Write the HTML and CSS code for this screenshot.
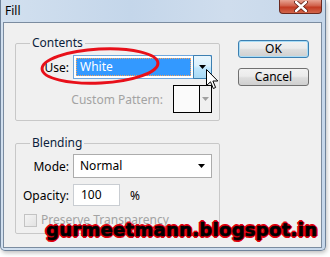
FILE: index.html
```html
<!DOCTYPE html>
<html lang="en">
<head>
    <meta charset="UTF-8">
    <title>Fill</title>
    <link rel="stylesheet" href="styles.css">
</head>
<body>

    <div class="window">
        <div class="titlebar">
            <span class="title">Fill</span>
            <div class="close-button">
                <svg width="14" height="11" viewBox="0 0 14 11">
                    <path d="M2 1 L12 10 M12 1 L2 10" stroke="#5a1a10" stroke-width="4" stroke-linecap="round"/>
                    <path d="M2 1 L12 10 M12 1 L2 10" stroke="#ffffff" stroke-width="2.4" stroke-linecap="round"/>
                </svg>
            </div>
        </div>

        <div class="client">
            <div class="panels">
                <fieldset class="group contents">
                    <legend>Contents</legend>
                    <div class="row">
                        <span class="field-label">Use:</span>
                        <div class="select focused">
                            <span class="select-value">White</span>
                            <span class="select-arrow hover">
                                <svg width="7" height="4" viewBox="0 0 7 4"><path d="M0 0 H7 L3.5 4 Z" fill="#000"/></svg>
                            </span>
                        </div>
                    </div>
                    <div class="row pattern-row">
                        <span class="field-label disabled">Custom Pattern:</span>
                        <div class="pattern-box">
                            <span class="pattern-swatch"></span>
                            <span class="pattern-arrow">
                                <svg width="7" height="4" viewBox="0 0 7 4"><path d="M0 0 H7 L3.5 4 Z" fill="#a0a0a0"/></svg>
                            </span>
                        </div>
                    </div>
                </fieldset>

                <fieldset class="group blending">
                    <legend>Blending</legend>
                    <div class="row">
                        <span class="field-label">Mode:</span>
                        <div class="select plain">
                            <span class="select-value">Normal</span>
                            <span class="select-arrow">
                                <svg width="7" height="4" viewBox="0 0 7 4"><path d="M0 0 H7 L3.5 4 Z" fill="#000"/></svg>
                            </span>
                        </div>
                    </div>
                    <div class="row opacity-row">
                        <span class="field-label">Opacity:</span>
                        <div class="text-input">100</div>
                        <span class="unit">%</span>
                    </div>
                    <div class="row check-row">
                        <span class="checkbox"></span>
                        <span class="disabled">Preserve Transparency</span>
                    </div>
                </fieldset>
            </div>

            <div class="actions">
                <button class="btn default">OK</button>
                <button class="btn">Cancel</button>
            </div>
        </div>

        <svg class="highlight" width="130" height="46" viewBox="0 0 130 46">
            <ellipse cx="64" cy="23" rx="58" ry="17" fill="none" stroke="#e8101a" stroke-width="3" transform="rotate(-3 64 23)"/>
        </svg>

        <svg class="cursor" width="13" height="21" viewBox="0 0 13 21">
            <path d="M0.5 0.5 V16.5 L4.5 12.8 L7.3 19.5 L9.6 18.5 L6.9 12 H11.8 Z" fill="#fff" stroke="#000" stroke-width="1" stroke-linejoin="miter"/>
        </svg>

        <div class="watermark">gurmeetmann.blogspot.in</div>
    </div>

</body>
</html>
```

FILE: styles.css
```css
body {
    margin: 0;
    width: 330px;
    height: 257px;
    background-color: #ffffff;
    font-family: "Noto Sans", "DejaVu Sans", sans-serif;
    font-size: 12px;
    color: #000;
    overflow: hidden;
}

.window {
    position: relative;
    box-sizing: border-box;
    width: 326px;
    height: 251px;
    border: 1px solid #6f839b;
    border-top: none;
    border-radius: 0 0 5px 5px;
    background: linear-gradient(90deg, #d2e0ef 0%, #c4d6ea 40%, #cfdded 70%, #c6d7ea 100%);
    box-shadow: 1px 2px 4px rgba(0, 0, 0, 0.25);
}

.titlebar {
    display: flex;
    justify-content: space-between;
    align-items: flex-start;
    height: 22px;
}

.title {
    padding: 4px 0 0 4px;
    line-height: 14px;
}

.close-button {
    display: flex;
    align-items: center;
    justify-content: center;
    box-sizing: border-box;
    width: 43px;
    height: 14px;
    margin-right: 3px;
    border: 1px solid #6b2a20;
    border-top: none;
    border-radius: 0 0 4px 4px;
    background: linear-gradient(180deg, #e8a393 0%, #d0604a 45%, #c23a22 55%, #d2664c 100%);
}

.client {
    display: flex;
    box-sizing: border-box;
    width: 319px;
    height: 226px;
    margin-left: 2px;
    border: 1px solid #7b8ca0;
    background-color: #f0f0f0;
}

.panels {
    display: flex;
    flex-direction: column;
    padding: 13px 0 0 11px;
}

.group {
    box-sizing: border-box;
    width: 205px;
    margin: 0;
    padding: 0 7px 0 0;
    border: 1px solid #c8c8c8;
    border-radius: 2px;
}

.group legend {
    margin-left: 14px;
    padding: 0 2px;
    line-height: 14px;
    color: #0c1e3c;
}

.contents {
    padding-top: 5px;
    padding-bottom: 7px;
}

.blending {
    margin-top: 15px;
    padding-top: 4px;
    padding-bottom: 6px;
}

.row {
    display: flex;
    align-items: center;
}

.field-label {
    width: 53px;
    margin-right: 4px;
    text-align: right;
}

.disabled {
    color: #a3a3a3;
}

.select {
    display: flex;
    box-sizing: border-box;
    width: 139px;
    height: 24px;
    border: 1px solid #acacac;
    background-color: #fff;
}

.select-value {
    flex: 1;
    padding-left: 6px;
    line-height: 22px;
}

.select.focused {
    border-color: #6fa7de;
    padding: 2px 0 2px 2px;
}

.select.focused .select-value {
    line-height: 18px;
    padding-left: 4px;
    color: #fff;
    background-color: #3399ff;
    outline: 1px dotted #f7a35c;
    outline-offset: -1px;
    margin-right: 2px;
}

.select-arrow {
    display: flex;
    align-items: center;
    justify-content: center;
    width: 16px;
}

.select.focused .select-arrow {
    margin: -3px -1px -3px 0;
    width: 17px;
    border: 1px solid #3c7fb1;
    border-radius: 0 2px 2px 0;
    background: linear-gradient(180deg, #eaf6fd 0%, #d9f0fc 45%, #bee6fd 55%, #a7d9f5 100%);
}

.select.plain .select-arrow {
    margin-right: 2px;
}

.pattern-row {
    justify-content: flex-end;
    margin-top: 6px;
}

.pattern-row .field-label {
    width: auto;
    margin-right: 10px;
}

.pattern-box {
    display: flex;
    box-sizing: border-box;
    width: 39px;
    height: 28px;
    border: 1px solid #000;
    background-color: #fbfbfb;
}

.pattern-swatch {
    width: 25px;
    border-right: 1px solid #000;
}

.pattern-arrow {
    display: flex;
    flex: 1;
    align-items: center;
    justify-content: center;
    background-color: #f0f0f0;
}

.opacity-row {
    margin-top: 6px;
}

.text-input {
    box-sizing: border-box;
    width: 47px;
    height: 22px;
    padding-left: 7px;
    border: 1px solid #c9cdd2;
    background-color: #fff;
    line-height: 20px;
}

.unit {
    margin-left: 10px;
}

.check-row {
    margin-top: 7px;
    padding-left: 8px;
    line-height: 14px;
}

.checkbox {
    box-sizing: border-box;
    width: 13px;
    height: 13px;
    margin-right: 4px;
    border: 1px solid #c3c3c3;
    background: linear-gradient(135deg, #f4f4f4 0%, #e2e2e2 100%);
}

.actions {
    display: flex;
    flex-direction: column;
    gap: 10px;
    padding: 17px 0 0 18px;
}

.btn {
    box-sizing: border-box;
    width: 71px;
    height: 18px;
    padding: 0;
    font-family: "Noto Sans", "DejaVu Sans", sans-serif;
    font-size: 12px;
    line-height: 14px;
    color: #000;
    border: 1px solid #707070;
    border-radius: 3px;
    background: linear-gradient(180deg, #f2f2f2 0%, #ebebeb 45%, #dddddd 55%, #cfcfcf 100%);
}

.btn.default {
    border-color: #3c7fb1;
    box-shadow: inset 0 0 0 1px #a8dcf6;
}

.highlight {
    position: absolute;
    top: 43px;
    left: 35px;
}

.cursor {
    position: absolute;
    top: 69px;
    left: 205px;
}

.watermark {
    position: absolute;
    top: 221px;
    left: 45px;
    font-family: "DejaVu Sans", sans-serif;
    font-weight: bold;
    font-size: 18px;
    line-height: 18px;
    letter-spacing: 0.3px;
    color: #000;
    -webkit-text-stroke: 0.6px #000;
    text-shadow:
        1px 0 0 #e3000f, -1px 0 0 #e3000f, 0 1px 0 #e3000f, 0 -1px 0 #e3000f,
        1px 1px 0 #e3000f, -1px -1px 0 #e3000f, 1px -1px 0 #e3000f, -1px 1px 0 #e3000f,
        2px 0 0 #e3000f, -2px 0 0 #e3000f, 0 2px 0 #e3000f, 0 -2px 0 #e3000f;
}
```
